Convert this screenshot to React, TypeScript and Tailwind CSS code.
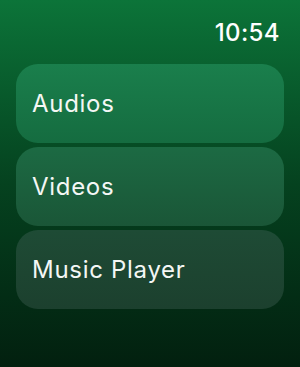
import React from 'react';

const items = ['Audios', 'Videos', 'Music Player'];

const cardBg = [
  'bg-gradient-to-b from-[#1a7f4c] to-[#156c40]',
  'bg-gradient-to-b from-[#1c6a43] to-[#1a5637]',
  'bg-gradient-to-b from-[#1e4b35] to-[#1c402e]',
];

export default function App() {
  return (
    <div
      className="w-[300px] h-[367px] overflow-hidden bg-gradient-to-b from-[#0c7439] via-[#05421f] to-[#02200f] text-white"
      style={{ fontFamily: 'Inter, "Noto Sans", sans-serif' }}
    >
      {/* status bar */}
      <div className="flex justify-end pt-[19px] pr-[20px] h-[64px]">
        <span className="text-[24px] leading-[28px] font-medium tracking-[0.4px]">10:54</span>
      </div>

      {/* menu */}
      <div className="flex flex-col gap-[4px] px-[16px]">
        {items.map((label, i) => (
          <button
            key={label}
            className={`h-[79px] rounded-[22px] px-[16px] flex items-center text-left ${cardBg[i]}`}
          >
            <span className="text-[24px] leading-none font-normal tracking-[0.7px] text-[#f4f7f5]">{label}</span>
          </button>
        ))}
      </div>
    </div>
  );
}
